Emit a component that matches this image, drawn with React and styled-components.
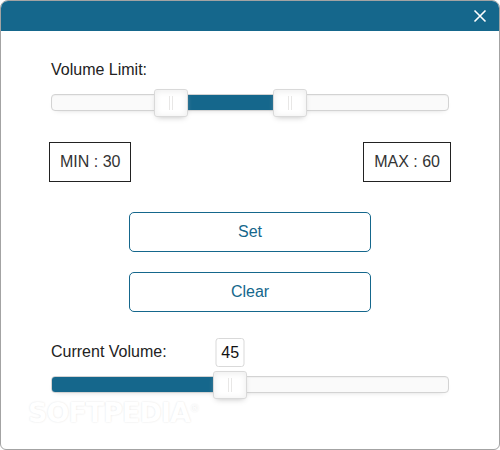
import styled, { createGlobalStyle } from "styled-components";

const GlobalStyle = createGlobalStyle`
  html, body {
    margin: 0;
    padding: 0;
    background: #ffffff;
  }
  body {
    font-family: "Liberation Sans", Arial, sans-serif;
  }
`;

const BLUE = "#15678c";

// dialog window
const Window = styled.div`
  position: relative;
  width: 500px;
  height: 450px;
  box-sizing: border-box;
  border: 1px solid #a3a3a3;
  border-radius: 8px 8px 6px 6px;
  overflow: hidden;
  background: #ffffff;
  display: flex;
  flex-direction: column;
`;

const Header = styled.div`
  height: 30px;
  background: ${BLUE};
  display: flex;
  justify-content: flex-end;
  align-items: center;
  padding-right: 12px;
`;

const CloseButton = styled.button`
  width: 14px;
  height: 14px;
  padding: 0;
  border: none;
  background: transparent;
  display: flex;
  cursor: pointer;
`;

const Content = styled.div`
  padding: 30px 50px 0;
  display: flex;
  flex-direction: column;
`;

const Label = styled.div`
  font-size: 16px;
  line-height: 17px;
  color: #222;
  margin-top: ${(p) => p.$top || 0}px;
`;

// slider parts (noUiSlider look)
const Track = styled.div`
  position: relative;
  height: 17px;
  box-sizing: border-box;
  margin-top: 16px;
  border: 1px solid #d3d3d3;
  border-radius: 4px;
  background: #fafafa;
  box-shadow: inset 0 1px 1px #f0f0f0, 0 3px 6px -5px #bbb;
`;

const Connects = styled.div`
  position: absolute;
  inset: 0;
  overflow: hidden;
  border-radius: 3px;
`;

const Fill = styled.div`
  position: absolute;
  top: 0;
  bottom: 0;
  background: ${BLUE};
`;

const Handle = styled.div`
  position: absolute;
  top: -6px;
  width: 34px;
  height: 28px;
  box-sizing: border-box;
  border: 1px solid #d9d9d9;
  border-radius: 3px;
  background: #fff;
  box-shadow: inset 0 0 1px #fff, inset 0 1px 7px #ebebeb, 0 3px 6px -3px #bbb;
  z-index: 2;

  &::before,
  &::after {
    content: "";
    position: absolute;
    top: 6px;
    width: 1px;
    height: 14px;
    background: #e8e7e6;
  }
  &::before { left: 14px; }
  &::after { left: 17px; }
`;

const Tooltip = styled.div`
  position: absolute;
  bottom: calc(100% + 5px);
  left: 50%;
  transform: translateX(-50%);
  width: 29px;
  height: 29px;
  box-sizing: border-box;
  border: 1px solid #d9d9d9;
  border-radius: 3px;
  background: #fff;
  font-size: 16px;
  line-height: 27px;
  text-align: center;
  color: #111;
`;

const BoundsRow = styled.div`
  margin: 31px -2px 0;
  display: flex;
  justify-content: space-between;
`;

const ValueBox = styled.div`
  height: 40px;
  box-sizing: border-box;
  border: 1px solid #222;
  padding: 0 10px;
  font-size: 16px;
  line-height: 38px;
  color: #333;
`;

const ActionButton = styled.button`
  align-self: center;
  width: 242px;
  height: 40px;
  margin-top: ${(p) => p.$top}px;
  border: 1px solid ${BLUE};
  border-radius: 5px;
  background: #fff;
  color: ${BLUE};
  font-family: "Liberation Sans", Arial, sans-serif;
  font-size: 16px;
  cursor: pointer;
`;

const Watermark = styled.div`
  position: absolute;
  left: 27px;
  top: 396px;
  font-family: "DejaVu Sans", sans-serif;
  font-weight: bold;
  font-size: 27px;
  letter-spacing: -1px;
  color: #ffffff;
  text-shadow: 0 0 2px rgba(0, 0, 0, 0.12);
  pointer-events: none;

  sup {
    font-size: 10px;
    font-weight: normal;
  }
`;

const Slider = ({ values, connectFrom, showTooltip }) => {
  const lo = connectFrom === "lower" ? 0 : values[0];
  const hi = connectFrom === "lower" ? values[0] : values[1];
  return (
    <Track>
      <Connects>
        <Fill style={{ left: `${lo}%`, width: `${hi - lo}%` }} />
      </Connects>
      {values.map((v) => (
        <Handle key={v} style={{ left: `calc(${v}% - 17px)` }}>
          {showTooltip && <Tooltip>{v}</Tooltip>}
        </Handle>
      ))}
    </Track>
  );
};

export default function App() {
  return (
    <>
      <GlobalStyle />
      <Window>
        <Header>
          <CloseButton aria-label="Close">
            <svg width="14" height="14" viewBox="0 0 14 14">
              <path d="M1.5 1.5 L12.5 12.5 M12.5 1.5 L1.5 12.5" stroke="#fff" strokeWidth="1.6" fill="none" />
            </svg>
          </CloseButton>
        </Header>
        <Content>
          <Label>Volume Limit:</Label>
          <Slider values={[30, 60]} />
          <BoundsRow>
            <ValueBox>MIN : 30</ValueBox>
            <ValueBox>MAX : 60</ValueBox>
          </BoundsRow>
          <ActionButton $top={30}>Set</ActionButton>
          <ActionButton $top={20}>Clear</ActionButton>
          <Label $top={31}>Current Volume:</Label>
          <Slider values={[45]} connectFrom="lower" showTooltip />
        </Content>
        <Watermark>
          SOFTPEDIA<sup>®</sup>
        </Watermark>
      </Window>
    </>
  );
}
